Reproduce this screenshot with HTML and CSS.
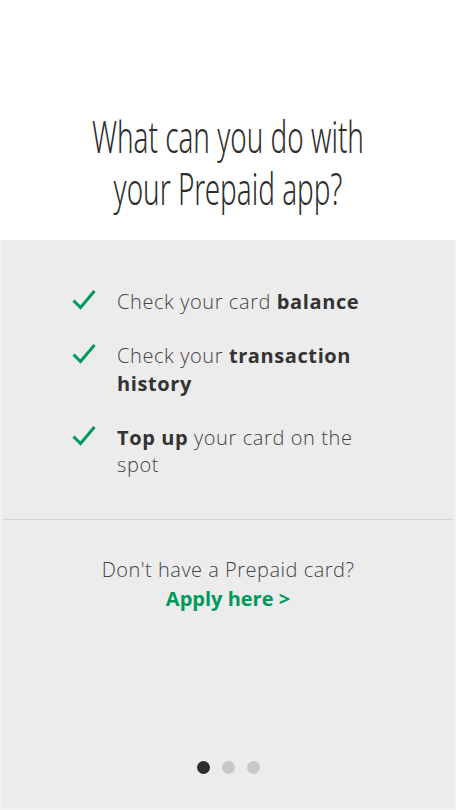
FILE: index.html
```html
<!DOCTYPE html>
<html lang="en">
<head>
<meta charset="utf-8">
<link rel="stylesheet" href="styles.css">
</head>
<body>
<div class="screen">
  <header class="top">
    <h1 class="title"><span class="title-inner">What can you do with<br>your Prepaid app?</span></h1>
  </header>
  <main class="panel">
    <ul class="features">
      <li class="feature">
        <svg class="check" viewBox="0 0 24 22" width="24" height="22"><path d="M1.5 11.5 L8.5 18.5 L22.5 2" fill="none" stroke="#00995a" stroke-width="3"/></svg>
        <span class="ftext">Check your card <b>balance</b></span>
      </li>
      <li class="feature">
        <svg class="check" viewBox="0 0 24 22" width="24" height="22"><path d="M1.5 11.5 L8.5 18.5 L22.5 2" fill="none" stroke="#00995a" stroke-width="3"/></svg>
        <span class="ftext">Check your <b>transaction history</b></span>
      </li>
      <li class="feature">
        <svg class="check" viewBox="0 0 24 22" width="24" height="22"><path d="M1.5 11.5 L8.5 18.5 L22.5 2" fill="none" stroke="#00995a" stroke-width="3"/></svg>
        <span class="ftext"><b>Top up</b> your card on the spot</span>
      </li>
    </ul>
    <section class="apply">
      <p class="question">Don't have a Prepaid card?</p>
      <a class="link">Apply here &gt;</a>
    </section>
    <nav class="dots">
      <span class="dot active"></span>
      <span class="dot"></span>
      <span class="dot"></span>
    </nav>
  </main>
</div>
</body>
</html>
```
FILE: styles.css
```css
* { box-sizing: border-box; }
html, body { margin: 0; padding: 0; background: #ffffff; }
.screen {
  width: 456px;
  height: 810px;
  display: flex;
  flex-direction: column;
  font-family: "Open Sans", "Noto Sans", sans-serif;
}
.top {
  height: 240px;
  display: flex;
  align-items: flex-start;
  justify-content: center;
  padding-top: 110px;
}
.title {
  margin: 0;
  font-family: "Noto Sans", sans-serif;
  font-weight: 300;
  font-size: 44px;
  line-height: 52px;
  color: #2e2e2e;
  text-align: center;
  white-space: nowrap;
}
.title-inner {
  display: inline-block;
  transform: scaleX(0.633);
  transform-origin: 50% 50%;
}
.panel {
  flex: 1;
  background: #ececec;
  border-left: 2px solid #f2f2f2;
  border-right: 2px solid #f2f2f2;
  border-bottom: 2px solid #f2f2f2;
  display: flex;
  flex-direction: column;
}
.features {
  list-style: none;
  margin: 0;
  padding: 48px 60px 40px 70px;
  display: flex;
  flex-direction: column;
  gap: 26.5px;
  border-bottom: 1px solid #d6d6d6;
}
.feature {
  display: flex;
  align-items: flex-start;
  gap: 21px;
}
.check { flex: none; margin-top: 1px; }
.ftext {
  font-size: 20px;
  line-height: 27.5px;
  color: #444444;
  font-weight: 300;
  letter-spacing: 0.6px;
}
.ftext b { font-weight: 700; color: #333333; }
.apply {
  padding-top: 35px;
  display: flex;
  flex-direction: column;
  align-items: center;
}
.question {
  margin: 0;
  font-size: 20px;
  line-height: 29px;
  color: #444444;
  font-weight: 300;
  letter-spacing: 0.5px;
}
.link {
  font-size: 20px;
  line-height: 29px;
  font-weight: 700;
  color: #00995a;
}
.dots {
  margin-top: auto;
  padding-bottom: 34px;
  display: flex;
  justify-content: center;
  gap: 12px;
}
.dot {
  width: 13px;
  height: 13px;
  border-radius: 50%;
  background: #c8c8c8;
}
.dot.active { background: #2e2e2e; }
```
